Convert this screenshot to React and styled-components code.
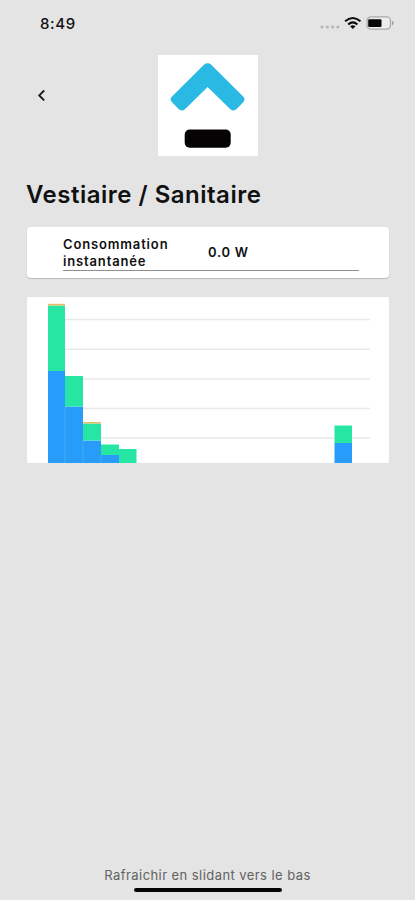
import styled, { createGlobalStyle } from "styled-components";

// heights in px, stacked from the bottom
const bars = [
  { x: 21, width: 17, blue: 92, green: 65.5, orange: 1.7 },
  { x: 38, width: 18, blue: 56.5, green: 30.5, orange: 0 },
  { x: 56, width: 18, blue: 22.5, green: 17, orange: 1.5 },
  { x: 74, width: 18, blue: 8, green: 10.5, orange: 0 },
  { x: 92, width: 17.5, blue: 0, green: 14, orange: 0 },
  { x: 307.5, width: 17.5, blue: 20, green: 17.5, orange: 0 },
];
const gridLines = [22.5, 52.2, 82, 111.5, 141];
const CHART_WIDTH = 361.5;
const CHART_HEIGHT = 166;

function StatusIcons() {
  return (
    <svg width="76" height="16" viewBox="0 0 76 16">
      <g fill="#b4b4b4">
        <circle cx="3" cy="12" r="1.5" />
        <circle cx="8.3" cy="12" r="1.5" />
        <circle cx="13.6" cy="12" r="1.5" />
        <circle cx="18.8" cy="12" r="1.5" />
      </g>
      <g fill="none" stroke="#080808" strokeWidth="2.1">
        <path d="M26.1 6.3Q33.8 -0.3 41.5 6.3" />
        <path d="M29.2 9.5Q33.8 5.4 38.4 9.5" />
      </g>
      <path d="M31.1 11.2Q33.8 9.1 36.5 11.2L33.8 13.9Z" fill="#080808" />
      <rect
        x="48.1"
        y="1.9"
        width="23.4"
        height="12.2"
        rx="3.8"
        fill="#ececec"
        stroke="#aaaaaa"
        strokeWidth="1.3"
      />
      <rect x="49.2" y="4.2" width="13.3" height="7.8" rx="1.2" fill="#050505" />
      <path d="M73 5.7Q76.3 8 73 10.3Z" fill="#999999" />
    </svg>
  );
}

function Logo() {
  return (
    <svg width="100" height="101" viewBox="1 0 100 101">
      <path
        d="M46.8 9Q50.2 6.6 53.6 9L86 41.3Q88.2 44 86 46.5L79.3 53.6Q76.2 56.3 73 53.8L50.2 31.7L27.6 53.8Q24.3 56.3 21.2 53.6L14.4 46.5Q12 44 14.4 41.3Z"
        transform="translate(0.4 0.4)"
        fill="#29b9e2"
      />
      <rect x="27.7" y="74.5" width="46" height="18.3" rx="5" fill="#050303" />
    </svg>
  );
}

function Chart() {
  return (
    <svg width={CHART_WIDTH} height={CHART_HEIGHT}>
      {gridLines.map((y) => (
        <line key={y} x1="21" x2="343" y1={y} y2={y} stroke="#e9e9e9" strokeWidth="1.4" />
      ))}
      {bars.map((bar) => {
        const blueTop = CHART_HEIGHT - bar.blue;
        const greenTop = blueTop - bar.green;
        return (
          <g key={bar.x}>
            <rect x={bar.x} y={blueTop} width={bar.width} height={bar.blue} fill="#289cfa" />
            <rect x={bar.x} y={greenTop} width={bar.width} height={bar.green} fill="#27e5a3" />
            <rect
              x={bar.x}
              y={greenTop - bar.orange}
              width={bar.width}
              height={bar.orange}
              fill="#e9bd68"
            />
          </g>
        );
      })}
      {[38, 56, 74].map((x, i) => (
        <line
          key={x}
          x1={x}
          x2={x}
          y1={[110, 144, 158][i]}
          y2={CHART_HEIGHT}
          stroke="#53b5f6"
          strokeWidth="0.7"
        />
      ))}
    </svg>
  );
}

function App() {
  return (
    <Screen>
      <GlobalStyle />
      <StatusBar>
        <Time>8:49</Time>
        <StatusIcons />
      </StatusBar>
      <Header>
        <BackButton aria-label="Retour">
          <svg width="9" height="13" viewBox="0 0 9 13">
            <path d="M7.2 1.5L2.2 6.4L7.2 11.3" fill="none" stroke="#151515" strokeWidth="1.8" />
          </svg>
        </BackButton>
        <LogoBox>
          <Logo />
        </LogoBox>
      </Header>
      <Title>Vestiaire / Sanitaire</Title>
      <Card>
        <CardRow>
          <Label>
            Consommation
            <br />
            instantanée
          </Label>
          <Value>0.0 W</Value>
        </CardRow>
      </Card>
      <ChartBox>
        <Chart />
      </ChartBox>
      <Footer>
        <Hint>Rafraichir en slidant vers le bas</Hint>
        <HomeIndicator />
      </Footer>
    </Screen>
  );
}

const GlobalStyle = createGlobalStyle`
  body {
    margin: 0;
    background-color: #e4e4e4;
  }
  * {
    box-sizing: border-box;
  }
  svg {
    display: block;
  }
`;
const Screen = styled.div`
  display: flex;
  flex-direction: column;
  width: 415px;
  height: 900px;
  overflow: hidden;
  background-color: #e4e4e4;
  color: #111111;
  font-family: Inter, "Liberation Sans", sans-serif;
`;
const StatusBar = styled.div`
  display: flex;
  justify-content: space-between;
  align-items: center;
  height: 46px;
  padding: 0 20px 0 40px;
`;
const Time = styled.span`
  font-size: 15px;
  font-weight: 500;
  letter-spacing: 0.6px;
`;
const Header = styled.header`
  display: grid;
  grid-template-columns: 131px 100px;
  height: 111px;
  padding: 9px 0 0 27px;
`;
const BackButton = styled.button`
  align-self: start;
  width: 30px;
  margin-top: 34px;
  padding: 0 0 0 10px;
  border: none;
  background-color: transparent;
`;
const LogoBox = styled.div`
  width: 100px;
  height: 101px;
  background-color: #ffffff;
`;
const Title = styled.h1`
  height: 70px;
  margin: 0;
  padding: 23px 0 0 26px;
  font-size: 24px;
  font-weight: 600;
  line-height: 30px;
  letter-spacing: 0.5px;
  white-space: nowrap;
`;
const Card = styled.section`
  height: 51px;
  margin: 0 26px 0 27px;
  padding: 8px 30px 7px 36px;
  border-radius: 4px;
  background-color: #ffffff;
  box-shadow: 0 1px 1px rgba(0, 0, 0, 0.18);
`;
const CardRow = styled.div`
  display: grid;
  grid-template-columns: 145px 1fr;
  align-items: center;
  height: 36px;
  border-bottom: 1px solid #909090;
`;
const Label = styled.span`
  font-size: 13px;
  font-weight: 600;
  line-height: 17px;
  letter-spacing: 0.85px;
  white-space: nowrap;
`;
const Value = styled.span`
  padding-bottom: 2px;
  font-size: 13px;
  font-weight: 600;
  letter-spacing: 0.75px;
`;
const ChartBox = styled.section`
  width: 361.5px;
  height: 166px;
  margin: 19px 0 0 27px;
  background-color: #ffffff;
`;
const Footer = styled.footer`
  display: flex;
  flex-direction: column;
  align-items: center;
  gap: 4px;
  margin-top: auto;
  padding-bottom: 8px;
`;
const Hint = styled.span`
  color: #626262;
  font-size: 13px;
  line-height: 18px;
  letter-spacing: 0.43px;
  white-space: nowrap;
`;
const HomeIndicator = styled.div`
  width: 148px;
  height: 4px;
  border-radius: 2px;
  background-color: #050505;
`;

export default App;
